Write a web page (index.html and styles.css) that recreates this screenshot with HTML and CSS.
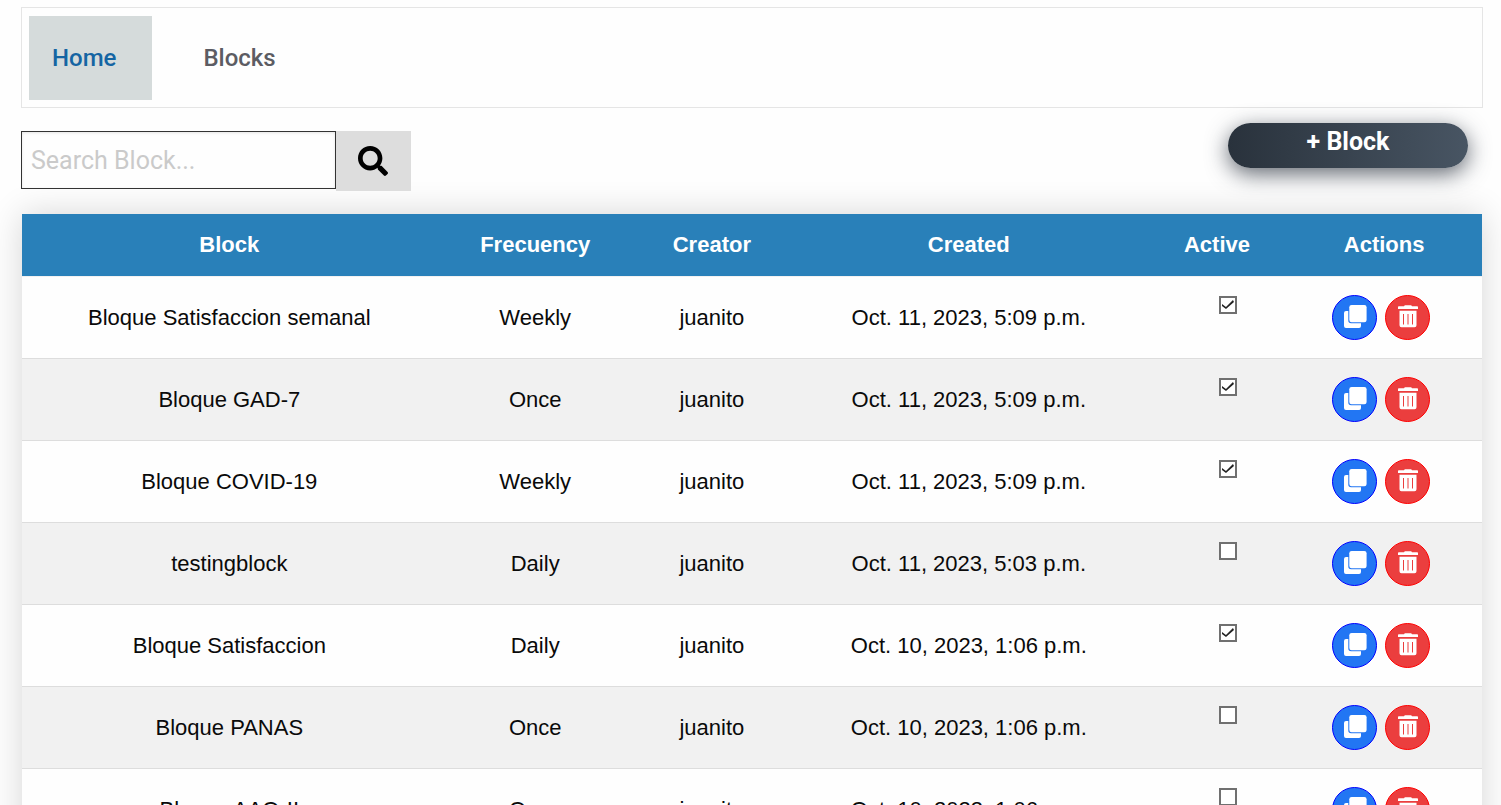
FILE: index.html
```html
<!DOCTYPE html>
<html lang="en">
<head>
<meta charset="utf-8">
<title>Blocks</title>
<link rel="stylesheet" href="styles.css">
</head>
<body>
<svg class="sprite" aria-hidden="true">
  <symbol id="search" viewBox="0 0 512 512"><path d="M505 442.700 405.300 343c-4.500-4.500-10.600-7-17-7H372c27.600-35.300 44-79.700 44-128C416 93.100 322.900 0 208 0S0 93.100 0 208s93.100 208 208 208c48.300 0 92.700-16.400 128-44v16.300c0 6.400 2.500 12.500 7 17l99.700 99.700c9.400 9.400 24.600 9.400 33.900 0l28.300-28.300c9.400-9.400 9.400-24.600.1-34zM208 336c-70.700 0-128-57.200-128-128 0-70.700 57.200-128 128-128 70.700 0 128 57.200 128 128 0 70.700-57.200 128-128 128z"/></symbol>
  <symbol id="copy" viewBox="0 0 24 24"><path d="M3 7h2.300v9.500a2.800 2.800 0 0 0 2.800 2.800H18V22a2 2 0 0 1-2 2H3a2 2 0 0 1-2-2V9a2 2 0 0 1 2-2z"/><rect x="6.300" y="1" width="17.300" height="17.300" rx="2.300"/></symbol>
  <symbol id="trash" viewBox="0 0 24 24"><path fill-rule="evenodd" d="M2.800 2.300H8l.8-1h6.400l.8 1h5.200q.8 0 .8.800V5H2V3.100q0-.8.8-.8zM3.500 6.700h17v14.600a2 2 0 0 1-2 2h-13a2 2 0 0 1-2-2zM7 10v10.500h1V10zm4.500 0v10.500h1V10zm4.500 0v10.500h1V10z"/></symbol>
</svg>
<nav class="nav">
  <a class="nav-link active" href="#">Home</a>
  <a class="nav-link" href="#">Blocks</a>
</nav>
<div class="toolbar">
  <form class="search">
    <input class="search-input" type="text" placeholder="Search Block..." aria-label="Search Block">
    <button class="search-button" type="button" aria-label="Search"><svg class="search-icon"><use href="#search"/></svg></button>
  </form>
  <button class="add-button" type="button">+ Block</button>
</div>
<table class="blocks">
  <colgroup><col class="col-block"><col class="col-frequency"><col class="col-creator"><col class="col-created"><col class="col-active"><col class="col-actions"></colgroup>
  <thead>
    <tr><th>Block</th><th>Frecuency</th><th>Creator</th><th>Created</th><th>Active</th><th>Actions</th></tr>
  </thead>
  <tbody>
    <tr><td>Bloque Satisfaccion semanal</td><td>Weekly</td><td>juanito</td><td>Oct. 11, 2023, 5:09 p.m.</td><td class="active-cell"><input class="check" type="checkbox" aria-label="Active" checked></td><td><div class="actions"><button class="action copy" type="button" aria-label="Copy"><svg class="icon"><use href="#copy"/></svg></button><button class="action delete" type="button" aria-label="Delete"><svg class="icon"><use href="#trash"/></svg></button></div></td></tr>
    <tr><td>Bloque GAD-7</td><td>Once</td><td>juanito</td><td>Oct. 11, 2023, 5:09 p.m.</td><td class="active-cell"><input class="check" type="checkbox" aria-label="Active" checked></td><td><div class="actions"><button class="action copy" type="button" aria-label="Copy"><svg class="icon"><use href="#copy"/></svg></button><button class="action delete" type="button" aria-label="Delete"><svg class="icon"><use href="#trash"/></svg></button></div></td></tr>
    <tr><td>Bloque COVID-19</td><td>Weekly</td><td>juanito</td><td>Oct. 11, 2023, 5:09 p.m.</td><td class="active-cell"><input class="check" type="checkbox" aria-label="Active" checked></td><td><div class="actions"><button class="action copy" type="button" aria-label="Copy"><svg class="icon"><use href="#copy"/></svg></button><button class="action delete" type="button" aria-label="Delete"><svg class="icon"><use href="#trash"/></svg></button></div></td></tr>
    <tr><td>testingblock</td><td>Daily</td><td>juanito</td><td>Oct. 11, 2023, 5:03 p.m.</td><td class="active-cell"><input class="check" type="checkbox" aria-label="Active"></td><td><div class="actions"><button class="action copy" type="button" aria-label="Copy"><svg class="icon"><use href="#copy"/></svg></button><button class="action delete" type="button" aria-label="Delete"><svg class="icon"><use href="#trash"/></svg></button></div></td></tr>
    <tr><td>Bloque Satisfaccion</td><td>Daily</td><td>juanito</td><td>Oct. 10, 2023, 1:06 p.m.</td><td class="active-cell"><input class="check" type="checkbox" aria-label="Active" checked></td><td><div class="actions"><button class="action copy" type="button" aria-label="Copy"><svg class="icon"><use href="#copy"/></svg></button><button class="action delete" type="button" aria-label="Delete"><svg class="icon"><use href="#trash"/></svg></button></div></td></tr>
    <tr><td>Bloque PANAS</td><td>Once</td><td>juanito</td><td>Oct. 10, 2023, 1:06 p.m.</td><td class="active-cell"><input class="check" type="checkbox" aria-label="Active"></td><td><div class="actions"><button class="action copy" type="button" aria-label="Copy"><svg class="icon"><use href="#copy"/></svg></button><button class="action delete" type="button" aria-label="Delete"><svg class="icon"><use href="#trash"/></svg></button></div></td></tr>
    <tr><td>Bloque AAQ-II</td><td>Once</td><td>juanito</td><td>Oct. 10, 2023, 1:06 p.m.</td><td class="active-cell"><input class="check" type="checkbox" aria-label="Active"></td><td><div class="actions"><button class="action copy" type="button" aria-label="Copy"><svg class="icon"><use href="#copy"/></svg></button><button class="action delete" type="button" aria-label="Delete"><svg class="icon"><use href="#trash"/></svg></button></div></td></tr>
  </tbody>
</table>
</body>
</html>
```

FILE: styles.css
```css
* { box-sizing: border-box; }

body {
  margin: 0;
  padding: 7px 18px 0 21px;
  background: #fefefe;
  font-family: Roboto, sans-serif;
}

.sprite { display: none; }

.nav {
  display: flex;
  gap: 28px;
  padding: 8px 7px 7px;
  border: 1px solid #e5e5e5;
}

.nav-link {
  padding: 28px 36px 28px 23px;
  color: #5c5c63;
  font-size: 24px;
  font-weight: 500;
  line-height: 28px;
  text-decoration: none;
}

.nav-link.active {
  background: #d5dbdb;
  color: #1565a3;
}

.toolbar {
  display: flex;
  justify-content: space-between;
  align-items: flex-start;
  padding: 15px 15px 0 0;
}

.search {
  display: flex;
  align-items: flex-start;
  padding-top: 8px;
}

.search-input {
  width: 315px;
  height: 58px;
  padding: 0 9px;
  border: 1px solid #333;
  border-radius: 0;
  background: #fefefe;
  box-shadow: inset 0 1px 3px rgba(10, 10, 10, 0.1);
  font-family: Roboto, sans-serif;
  font-size: 25px;
}

.search-input::placeholder { color: #cacaca; }

.search-button {
  display: flex;
  align-items: center;
  justify-content: center;
  width: 75px;
  height: 60px;
  padding: 0 2px 0 0;
  border: 0;
  background: #ddd;
}

.search-icon {
  width: 30px;
  height: 30px;
}

.add-button {
  width: 240px;
  height: 45px;
  padding: 0 0 7px;
  border: 0;
  border-radius: 23px;
  background: linear-gradient(to right, #29323c, #485563);
  box-shadow: 0 6px 22px rgba(45, 54, 65, 0.75);
  color: #fff;
  font-family: Roboto, sans-serif;
  font-size: 25px;
  font-weight: 700;
  line-height: 30px;
}

.blocks {
  width: calc(100% - 2px);
  margin: 23px 1px 24px;
  border-collapse: separate;
  border-spacing: 0;
  table-layout: fixed;
  background: #fefefe;
  box-shadow: 0 0 32px rgba(0, 0, 0, 0.16);
  color: #0a0a0a;
  font-family: "Liberation Sans", Arial, sans-serif;
  font-size: 22px;
  line-height: 28px;
  text-align: center;
}

.col-block { width: 28.4%; }
.col-frequency { width: 13.5%; }
.col-creator { width: 10.7%; }
.col-created { width: 24.5%; }
.col-active { width: 9.5%; }
.col-actions { width: 13.4%; }

.blocks th {
  padding: 17px 0;
  border-bottom: 1px solid #f1f1f1;
  background: #2980b9;
  background-clip: padding-box;
  color: #fff;
  font-weight: 700;
}

.blocks td {
  padding: 18px 0;
  border-bottom: 1px solid #ddd;
}

.blocks tbody tr:nth-child(even) { background: #f1f1f1; }

.blocks .active-cell {
  padding: 19px 0 0 22px;
  vertical-align: top;
}

.check {
  display: block;
  width: 18px;
  height: 18px;
  margin: 0 auto;
  border: 2px solid #707070;
  background: #fff;
  appearance: none;
}

.check:checked::before {
  content: "";
  display: block;
  height: 14px;
  background: #222;
  clip-path: polygon(1px 6px, 5px 9px, 12px 2px, 13px 4px, 5px 11px, 1px 8px);
}

.actions {
  display: flex;
  justify-content: center;
  gap: 8px;
  padding-right: 6px;
}

.action {
  display: flex;
  align-items: center;
  justify-content: center;
  width: 45px;
  height: 45px;
  padding: 0 0 3px 1px;
  border: 1px solid;
  border-radius: 50%;
  color: #fff;
}

.copy {
  border-color: #00f;
  background: #2276f3;
}

.delete {
  border-color: #f00;
  background: #eb3e3e;
}

.icon {
  width: 24px;
  height: 24px;
  fill: currentColor;
}
```
